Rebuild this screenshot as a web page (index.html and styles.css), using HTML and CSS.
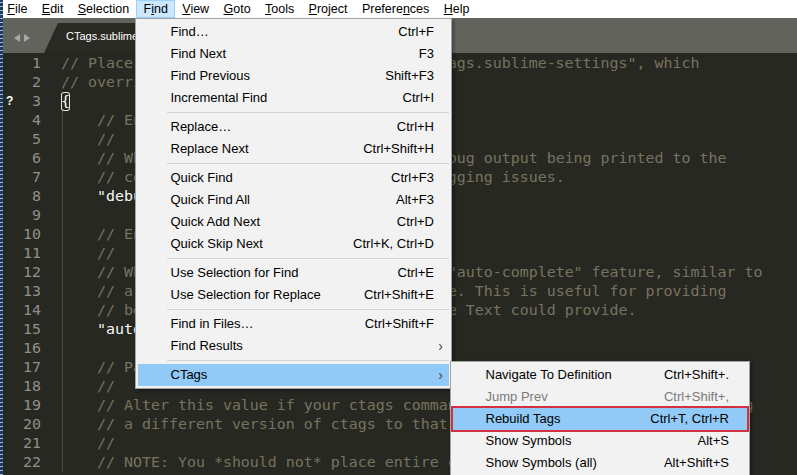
FILE: index.html
```html
<!DOCTYPE html>
<html lang="en">
<head>
    <meta charset="UTF-8">
    <title>CTags.sublime-settings - Sublime Text</title>
    <link rel="stylesheet" href="styles.css">
</head>
<body>
<div class="window">
    <div class="frame-edge"></div>
    <div class="app">
        <div class="menubar">
            <span class="menu-item"><u>F</u>ile</span>
            <span class="menu-item"><u>E</u>dit</span>
            <span class="menu-item"><u>S</u>election</span>
            <span class="menu-item open">F<u>i</u>nd</span>
            <span class="menu-item"><u>V</u>iew</span>
            <span class="menu-item"><u>G</u>oto</span>
            <span class="menu-item"><u>T</u>ools</span>
            <span class="menu-item"><u>P</u>roject</span>
            <span class="menu-item">Prefere<u>n</u>ces</span>
            <span class="menu-item"><u>H</u>elp</span>
        </div>

        <div class="tabbar">
            <div class="tab-nav">
                <span class="arrow arrow-left"></span>
                <span class="arrow arrow-right"></span>
            </div>
            <div class="tab">CTags.sublime-settings</div>
        </div>

        <div class="editor">
            <div class="gutter">
                <div class="ln">1</div>
                <div class="ln">2</div>
                <div class="ln"><span class="mark">?</span>3</div>
                <div class="ln">4</div>
                <div class="ln">5</div>
                <div class="ln">6</div>
                <div class="ln">7</div>
                <div class="ln">8</div>
                <div class="ln">9</div>
                <div class="ln">10</div>
                <div class="ln">11</div>
                <div class="ln">12</div>
                <div class="ln">13</div>
                <div class="ln">14</div>
                <div class="ln">15</div>
                <div class="ln">16</div>
                <div class="ln">17</div>
                <div class="ln">18</div>
                <div class="ln">19</div>
                <div class="ln">20</div>
                <div class="ln">21</div>
                <div class="ln">22</div>
            </div>
            <div class="code">
                <div class="line"><span class="c">// Place your settings in the file "User/CTags.sublime-settings", which</span></div>
                <div class="line"><span class="c">// overrides the settings in here.</span></div>
                <div class="line"><span class="bracket">{</span></div>
                <div class="block">
                    <div class="line">    <span class="c">// Enable debugging.</span></div>
                    <div class="line">    <span class="c">//</span></div>
                    <div class="line">    <span class="c">// When enabled, this will result in debug output being printed to the</span></div>
                    <div class="line">    <span class="c">// console. This can be useful for debugging issues.</span></div>
                    <div class="line">    <span class="s">"debug"</span>: false,</div>
                    <div class="line"> </div>
                    <div class="line">    <span class="c">// Enable auto-complete.</span></div>
                    <div class="line">    <span class="c">//</span></div>
                    <div class="line">    <span class="c">// When enabled, this will turn on the "auto-complete" feature, similar to</span></div>
                    <div class="line">    <span class="c">// a lightweight version of Intellisense. This is useful for providing</span></div>
                    <div class="line">    <span class="c">// better suggestions than stock Sublime Text could provide.</span></div>
                    <div class="line">    <span class="s">"autocomplete"</span>: false,</div>
                    <div class="line"> </div>
                    <div class="line">    <span class="c">// Path to ctags executable.</span></div>
                    <div class="line">    <span class="c">//</span></div>
                    <div class="line">    <span class="c">// Alter this value if your ctags command is not in the PATH, or if using</span></div>
                    <div class="line">    <span class="c">// a different version of ctags to that in the path (i.e. for OSX).</span></div>
                    <div class="line">    <span class="c">//</span></div>
                    <div class="line">    <span class="c">// NOTE: You *should not* place entire commands here.</span></div>
                </div>
            </div>
        </div>
    </div>

    <!-- Find menu (open) -->
    <div class="dropdown find-menu">
        <div class="item"><span>Find…</span><span>Ctrl+F</span></div>
        <div class="item"><span>Find Next</span><span>F3</span></div>
        <div class="item"><span>Find Previous</span><span>Shift+F3</span></div>
        <div class="item"><span>Incremental Find</span><span>Ctrl+I</span></div>
        <div class="sep"></div>
        <div class="item"><span>Replace…</span><span>Ctrl+H</span></div>
        <div class="item"><span>Replace Next</span><span>Ctrl+Shift+H</span></div>
        <div class="sep"></div>
        <div class="item"><span>Quick Find</span><span>Ctrl+F3</span></div>
        <div class="item"><span>Quick Find All</span><span>Alt+F3</span></div>
        <div class="item"><span>Quick Add Next</span><span>Ctrl+D</span></div>
        <div class="item"><span>Quick Skip Next</span><span>Ctrl+K, Ctrl+D</span></div>
        <div class="sep"></div>
        <div class="item"><span>Use Selection for Find</span><span>Ctrl+E</span></div>
        <div class="item"><span>Use Selection for Replace</span><span>Ctrl+Shift+E</span></div>
        <div class="sep"></div>
        <div class="item"><span>Find in Files…</span><span>Ctrl+Shift+F</span></div>
        <div class="item"><span>Find Results</span><span class="sub-arrow">›</span></div>
        <div class="sep"></div>
        <div class="item active"><span>CTags</span><span class="sub-arrow">›</span></div>
    </div>

    <!-- CTags submenu -->
    <div class="dropdown ctags-menu">
        <div class="item"><span>Navigate To Definition</span><span>Ctrl+Shift+.</span></div>
        <div class="item disabled"><span>Jump Prev</span><span>Ctrl+Shift+,</span></div>
        <div class="item active marked"><span>Rebuild Tags</span><span>Ctrl+T, Ctrl+R</span></div>
        <div class="item"><span>Show Symbols</span><span>Alt+S</span></div>
        <div class="item"><span>Show Symbols (all)</span><span>Alt+Shift+S</span></div>
    </div>
</div>
</body>
</html>
```

FILE: styles.css
```css
/* General reset */
* {
    margin: 0;
    padding: 0;
    box-sizing: border-box;
}

body {
    width: 797px;
    height: 475px;
    overflow: hidden;
    background-color: #272822;
    font-family: 'Liberation Sans', Arial, sans-serif;
}

.window {
    position: relative;
    display: flex;
    width: 797px;
    height: 475px;
    overflow: hidden;
}

/* dotted focus edge on the left of the window */
.frame-edge {
    width: 3px;
    flex-shrink: 0;
    background: repeating-linear-gradient(#1b3b60 0 2px, #9fbad3 2px 3px, #1b3b60 3px 4px);
}

.app {
    flex: 1;
    display: flex;
    flex-direction: column;
    min-width: 0;
}

/* Menu bar */
.menubar {
    display: flex;
    height: 18px;
    flex-shrink: 0;
    background: #ffffff;
    font-size: 12.5px;
    line-height: 18px;
    color: #000;
}

.menu-item {
    padding: 0 7.2px;
    white-space: nowrap;
}

.menu-item:first-child {
    padding-left: 4.3px;
}

.menu-item.open {
    background: #cce8ff;
    box-shadow: inset 0 0 0 1px #99d1ff;
}

/* Tab bar */
.tabbar {
    display: flex;
    align-items: flex-end;
    height: 35px;
    flex-shrink: 0;
    background: #63635e;
}

.tab-nav {
    display: flex;
    align-items: center;
    gap: 4px;
    width: 41px;
    height: 30px;
    padding-left: 11px;
}

.arrow {
    width: 0;
    height: 0;
    border-top: 4.5px solid transparent;
    border-bottom: 4.5px solid transparent;
}

.arrow-left {
    border-right: 6px solid #a9a9a4;
}

.arrow-right {
    border-left: 6px solid #a9a9a4;
}

.tab {
    width: 230px;
    height: 30px;
    padding-left: 22px;
    background: #2a2a25;
    clip-path: polygon(0 100%, 14px 0, calc(100% - 14px) 0, 100% 100%);
    color: #ffffff;
    font-size: 11px;
    line-height: 27px;
    white-space: nowrap;
}

/* Editor */
.editor {
    flex: 1;
    display: flex;
    padding-top: 1px;
    background: #272822;
    font-family: 'DejaVu Sans Mono', 'Liberation Mono', monospace;
    font-size: 14.95px;
    line-height: 19px;
    min-height: 0;
}

.gutter {
    width: 39px;
    flex-shrink: 0;
    padding: 0 1px 0 3px;
    color: #8f908a;
}

.ln {
    display: flex;
    justify-content: flex-end;
    height: 19px;
}

.mark {
    margin-right: auto;
    color: #ffffff;
    font-family: 'Liberation Sans', Arial, sans-serif;
    font-size: 12px;
    font-weight: bold;
}

.code {
    flex: 1;
    margin-left: 19px;
    color: #f8f8f2;
    overflow: hidden;
}

.line {
    height: 19px;
    white-space: pre;
}

.block {
    background: linear-gradient(#4a4a43, #4a4a43) no-repeat 1px 0 / 1px 100%;
}

.c {
    color: #77735f;
}

.s {
    color: #f8f8f2;
}

.bracket {
    display: inline-block;
    height: 19px;
    box-shadow: inset 0 0 0 1px #e6e6df;
    border-radius: 3px;
}

/* Drop-down menus */
.dropdown {
    position: absolute;
    padding: 2px;
    background: #f2f2f2;
    border: 1px solid #a3a3a3;
    box-shadow: 2px 2px 3px rgba(0, 0, 0, 0.35);
    font-size: 13px;
    color: #000;
}

.find-menu {
    left: 135px;
    top: 18px;
    width: 317px;
}

.ctags-menu {
    left: 450px;
    top: 361px;
    width: 300px;
}

.item {
    display: flex;
    justify-content: space-between;
    height: 22px;
    line-height: 22px;
    padding: 0 15px 0 32.5px;
    white-space: nowrap;
}

.ctags-menu .item {
    padding-right: 18px;
}

.item.active {
    background: #91c9f7;
}

.item.disabled {
    color: #7a7a7a;
}

.item.marked {
    outline: 2px solid #d2323f;
}

.sub-arrow {
    margin-right: -9px;
    color: #444;
    font-size: 14px;
}

.sep {
    height: 1px;
    margin: 3px 0 3px 29px;
    background: #d5d5d5;
}
```
